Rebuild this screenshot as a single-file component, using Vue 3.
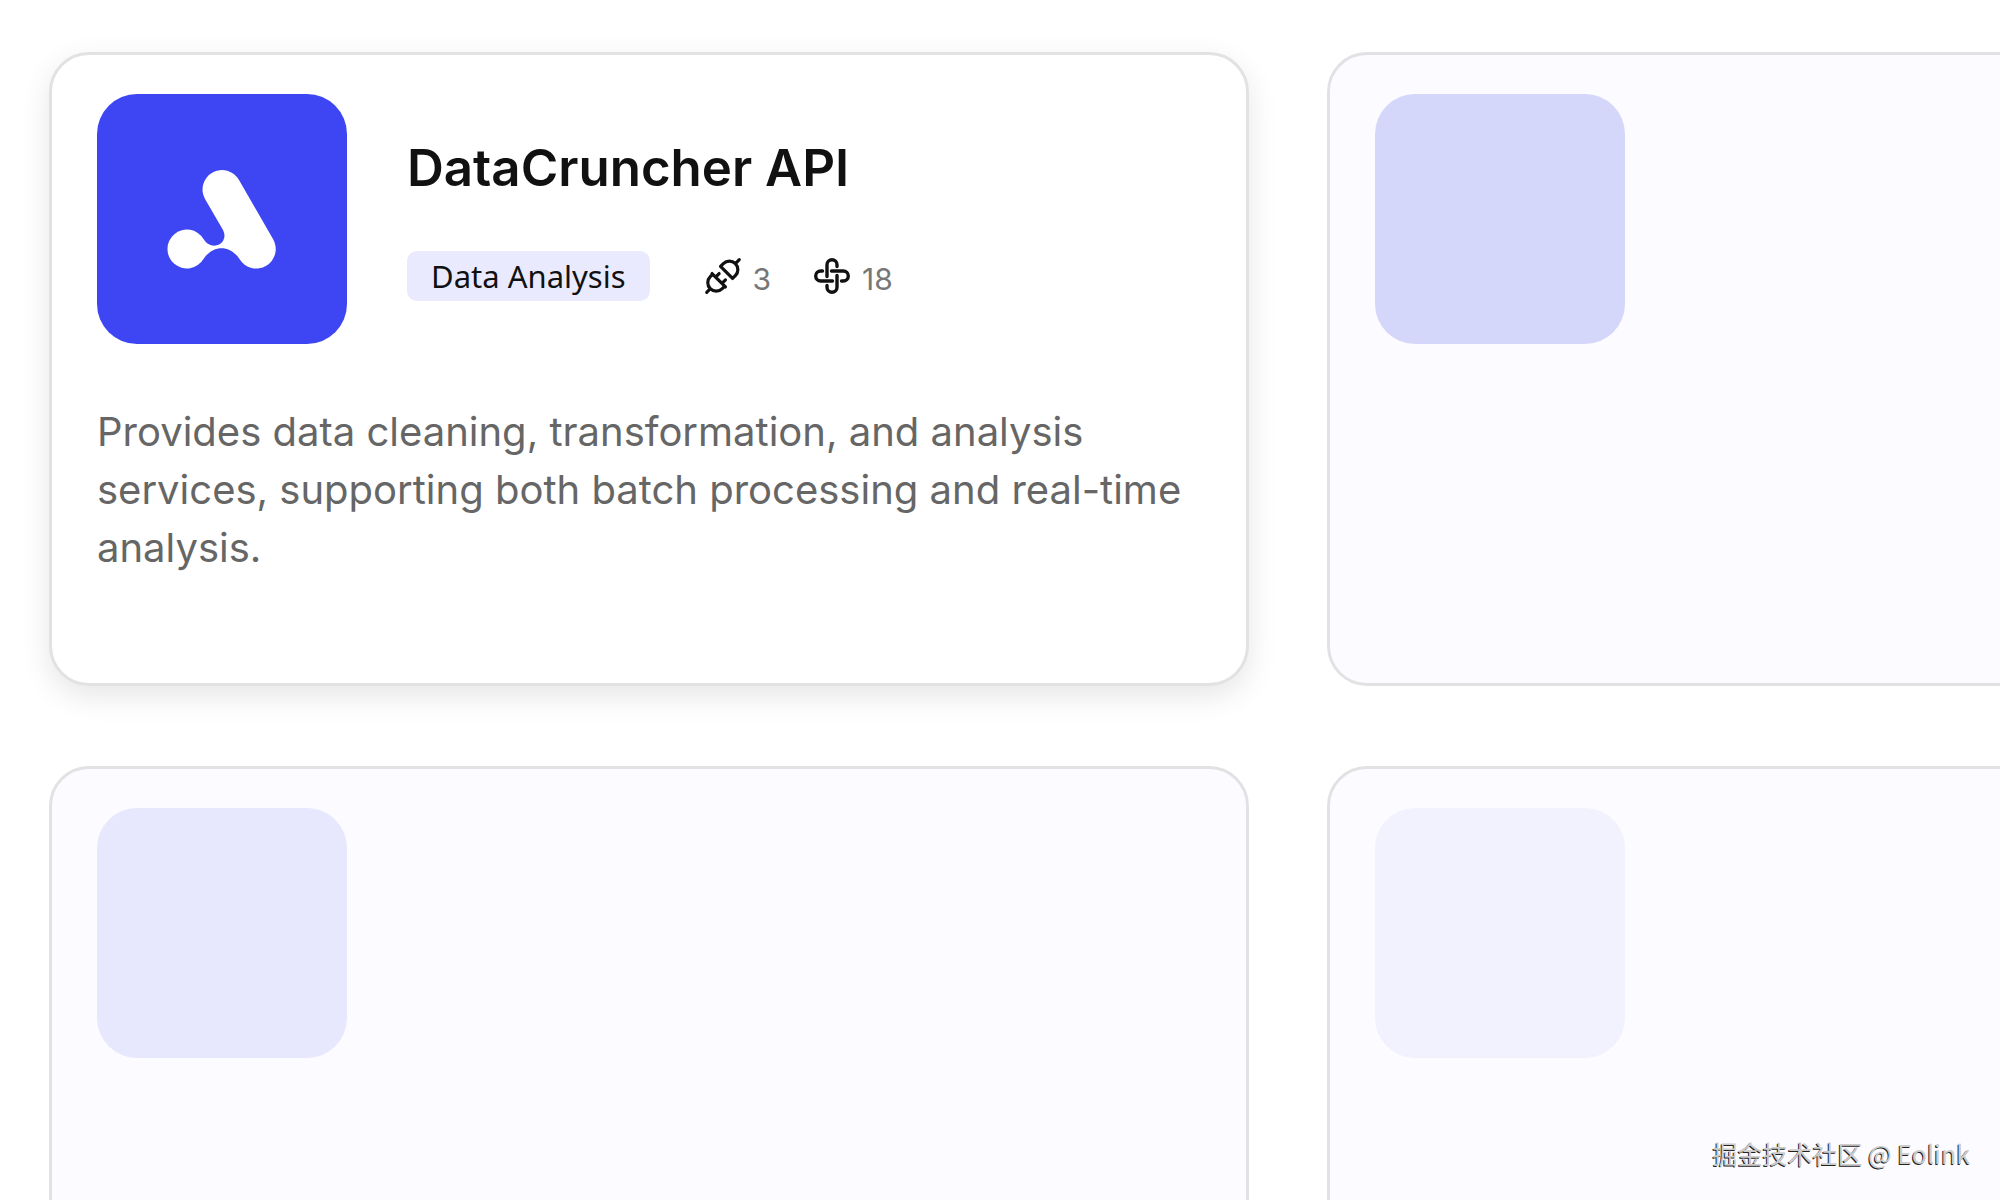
<script setup>
import { ref } from "vue";
const service = ref({
	name: "DataCruncher API",
	category: "Data Analysis",
	plugins: 3,
	apis: 18,
	description: "Provides data cleaning, transformation, and analysis services, supporting both batch processing and real-time analysis.",
});
const placeholders = ["strong", "medium", "light"];
const loops = [0, 90, 180, 270];
</script>
<template>
	<main class="page">
		<div class="grid">
			<article class="card active">
				<div class="head">
					<div class="logo">
						<svg viewBox="0 0 250 250" aria-hidden="true">
							<path fill="#fff" d="M108 105 A19.400 19.400 0 0 1 142 86 L176 145 A19.400 19.400 0 0 1 142.500 165 C133 150.500 116 150.500 106.500 165 A19.400 19.400 0 1 1 106.500 145 C112 154 122 153 126 147 Q129 142 126 136 Z" />
						</svg>
					</div>
					<div class="info">
						<h2 class="name">{{ service.name }}</h2>
						<div class="meta">
							<span class="tag">{{ service.category }}</span>
							<span class="count">
								<svg class="icon" viewBox="-18 -18 36 36" stroke-width="3.2" aria-hidden="true">
									<g transform="rotate(45)">
										<path d="M0 -23V-18M-8.500 -5H8.500V-9A8.500 8.500 0 0 0 -8.500 -9ZM-9.500 6H9.500M-8.500 6V9.500A8.500 8.500 0 0 0 8.500 9.500V6M0 18V23M-4.500 6V1M4.500 6V1" />
									</g>
								</svg>
								<span class="num">{{ service.plugins }}</span>
							</span>
							<span class="count">
								<svg class="icon" viewBox="-18 -18 36 36" stroke-width="3.4" aria-hidden="true">
									<path v-for="angle in loops" :key="angle" :transform="`rotate(${angle})`" d="M5 -9.500V-11.300A5 5 0 0 0 -5 -11.300V0.500" />
								</svg>
								<span class="num">{{ service.apis }}</span>
							</span>
						</div>
					</div>
				</div>
				<p class="desc">{{ service.description }}</p>
			</article>
			<article v-for="tone in placeholders" :key="tone" class="card">
				<div class="logo" :class="tone"></div>
			</article>
		</div>
		<div class="watermark">掘金技术社区 @ Eolink</div>
	</main>
</template>
<style>
body {
	margin: 0;
	background: #fff;
}
</style>
<style scoped>
.page {
	position: relative;
	box-sizing: border-box;
	height: 100vh;
	padding: 52px 0 0 49px;
	overflow: hidden;
	font-family: Inter, "Noto Sans CJK SC", sans-serif;
}
.grid {
	display: grid;
	grid-template-columns: repeat(2, 60vw);
	gap: 80px 78px;
}
.card {
	box-sizing: border-box;
	min-height: 634px;
	padding: 39px 45px;
	border: 3px solid #e2e2e4;
	border-radius: 40px;
	background: #fcfbff;
}
.card.active {
	background: #fff;
	box-shadow: 0 10px 30px rgba(0, 0, 0, 0.1);
}
.head {
	display: flex;
	gap: 60px;
}
.logo {
	flex: none;
	width: 250px;
	height: 250px;
	border-radius: 40px;
	background: #3e46f4;
}
.logo svg {
	display: block;
}
.logo.strong {
	background: #d5d7fa;
}
.logo.medium {
	background: #e7e7fe;
}
.logo.light {
	background: #f2f2fe;
}
.info {
	padding-top: 44px;
}
.name {
	margin: 0;
	font-size: 51px;
	font-weight: 600;
	line-height: 60px;
	color: #111;
}
.meta {
	display: flex;
	align-items: center;
	margin-top: 53px;
}
.tag {
	padding: 0 24px;
	margin-right: 12px;
	border-radius: 10px;
	background: #e9eafd;
	font-family: "Noto Sans", sans-serif;
	font-size: 31px;
	line-height: 50px;
	color: #111;
}
.count {
	display: flex;
	align-items: center;
	gap: 12px;
	margin-left: 43px;
}
.icon {
	width: 36px;
	height: 36px;
	overflow: visible;
	fill: none;
	stroke: #111;
	stroke-linecap: round;
	stroke-linejoin: round;
}
.num {
	padding-top: 6px;
	font-size: 30px;
	line-height: 36px;
	color: #777;
}
.desc {
	margin: 59px 0 0;
	font-size: 40px;
	line-height: 58px;
	color: #666;
}
.watermark {
	position: absolute;
	right: 30px;
	bottom: 29px;
	font-family: "Noto Sans CJK SC", sans-serif;
	font-size: 25px;
	line-height: 36px;
	color: #ccc;
	text-shadow: -1px 1px 0 #222;
}
</style>
